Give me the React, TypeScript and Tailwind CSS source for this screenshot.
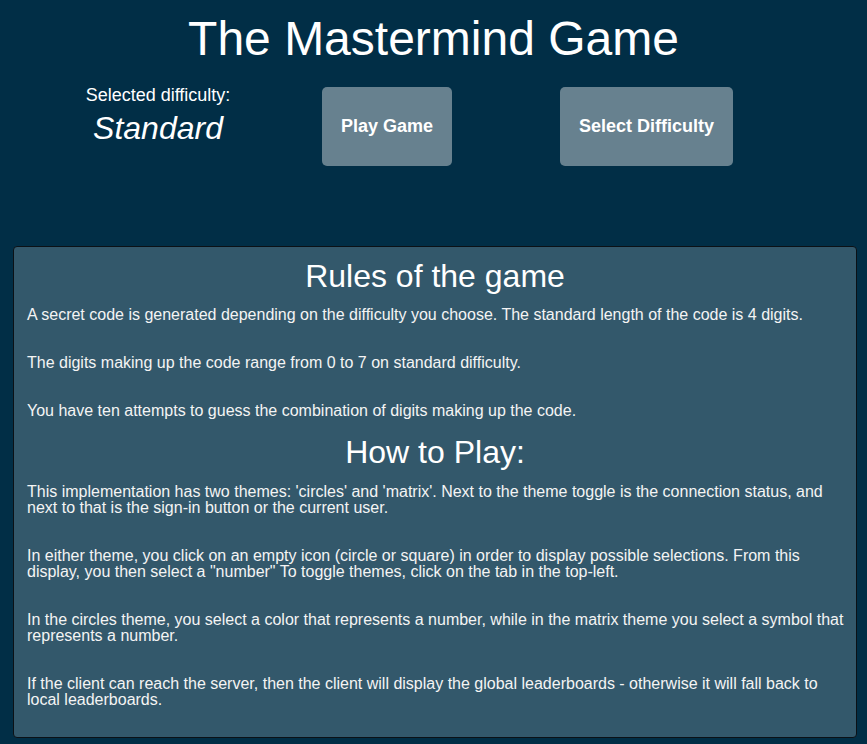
const RULES = [
  'A secret code is generated depending on the difficulty you choose. The standard length of the code is 4 digits.',
  'The digits making up the code range from 0 to 7 on standard difficulty.',
  'You have ten attempts to guess the combination of digits making up the code.',
]

const HOW_TO = [
  "This implementation has two themes: 'circles' and 'matrix'. Next to the theme toggle is the connection status, and next to that is the sign-in button or the current user.",
  'In either theme, you click on an empty icon (circle or square) in order to display possible selections. From this display, you then select a "number" To toggle themes, click on the tab in the top-left.',
  'In the circles theme, you select a color that represents a number, while in the matrix theme you select a symbol that represents a number.',
  'If the client can reach the server, then the client will display the global leaderboards - otherwise it will fall back to local leaderboards.',
]

export default function App() {
  return (
    <div
      className="min-h-[744px] w-full bg-[#012e46] pt-[11px] pb-[7px] text-white"
      style={{ fontFamily: '"Liberation Sans", Arial, sans-serif' }}
    >
      {/* Header */}
      <h1 className="text-center text-[48px] leading-[55px]">The Mastermind Game</h1>

      <div className="mt-[19px] flex items-start">
        <div className="ml-[58px] flex w-[200px] flex-col items-center">
          <div className="text-[18px] leading-[21px]">Selected difficulty:</div>
          <div className="mt-[4px] text-[32px] leading-[37px] italic">Standard</div>
        </div>
        <button className="mt-[2px] ml-[64px] flex h-[79px] items-center rounded-[5px] bg-[#67818f] px-[19px] text-[18px] font-bold">
          Play Game
        </button>
        <button className="mt-[2px] ml-[108px] flex h-[79px] items-center rounded-[5px] bg-[#67818f] px-[19px] text-[18px] font-bold">
          Select Difficulty
        </button>
      </div>

      {/* Rules panel */}
      <div className="mt-[80px] ml-[13px] w-[844px] rounded-[4px] border border-[#0b1116] bg-[#33586b] pt-[13px] pr-[6px] pb-[29px] pl-[13px]">
        <h2 className="pr-[7px] text-center text-[32px] leading-[32px]">Rules of the game</h2>
        <div className="mt-[15px] flex flex-col gap-8">
          {RULES.map((t) => (
            <p key={t} className="text-[16px] leading-4 text-[#f4f4f4]">{t}</p>
          ))}
        </div>
        <h2 className="mt-[17px] pr-[7px] text-center text-[32px] leading-[32px]">How to Play:</h2>
        <div className="mt-4 flex flex-col gap-8">
          {HOW_TO.map((t) => (
            <p key={t} className="text-[16px] leading-4 text-[#f4f4f4]">{t}</p>
          ))}
        </div>
      </div>
    </div>
  )
}
